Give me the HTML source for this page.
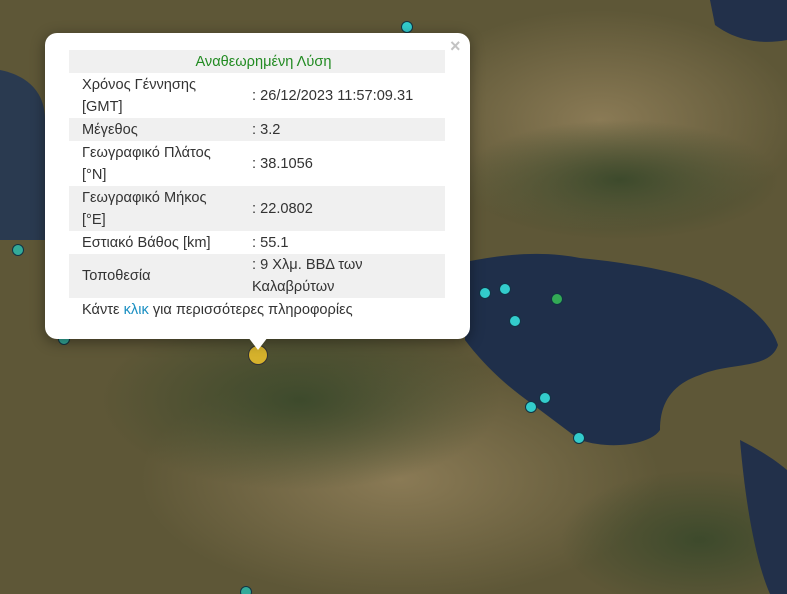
<!DOCTYPE html>
<html><head><meta charset="utf-8"><style>
html,body{margin:0;padding:0;width:787px;height:594px;overflow:hidden}
body{position:relative;font-family:"Liberation Sans",Arial,sans-serif;background:#5b5436}
#map{position:absolute;left:0;top:0;width:787px;height:594px}
.pop{position:absolute;left:45px;top:33px;width:425px;height:306px;background:#fff;border-radius:12px;box-shadow:0 3px 14px rgba(0,0,0,.4)}
.tip{position:absolute;left:248px;top:337px;width:0;height:0;border-left:10px solid transparent;border-right:10px solid transparent;border-top:13px solid #fff}
.x{position:absolute;left:450px;top:36px;color:#c3c3c3;font:bold 18px "Liberation Sans",sans-serif}
table{position:absolute;left:69px;top:50px;width:376px;border-collapse:collapse;font-size:14.6px;color:#333}
td{padding:0 0 0 13px;line-height:22px}
tr.g{background:#f0f0f0}
td.v{width:193px;padding-left:0}
.h{text-align:center;color:#228b22;height:23px;background:#f0f0f0}
.lk{position:absolute;left:82px;top:302px;font-size:14.6px;color:#333}
.lk span{color:#1a8fc2}
.d{position:absolute;width:10px;height:10px;border-radius:50%;border:1px solid #134;}
</style></head><body>
<svg id="map" viewBox="0 0 787 594">
<defs>
<radialGradient id="a" cx=".5" cy=".5" r=".5"><stop offset="0" stop-color="#8a7a55"/><stop offset="1" stop-color="#8a7a55" stop-opacity="0"/></radialGradient>
<radialGradient id="b" cx=".5" cy=".5" r=".5"><stop offset="0" stop-color="#3d4a2c"/><stop offset="1" stop-color="#3d4a2c" stop-opacity="0"/></radialGradient>
</defs>
<rect width="787" height="594" fill="#5e5737"/>
<ellipse cx="600" cy="120" rx="200" ry="110" fill="url(#a)"/>
<ellipse cx="400" cy="480" rx="260" ry="120" fill="url(#a)"/>
<ellipse cx="300" cy="400" rx="200" ry="90" fill="url(#b)"/>
<ellipse cx="700" cy="540" rx="140" ry="70" fill="url(#b)"/>
<ellipse cx="620" cy="180" rx="160" ry="60" fill="url(#b)"/>
<path d="M465 262 C500 255 540 250 580 258 C620 262 660 268 700 280 C740 295 770 320 778 345 C770 370 730 362 700 375 C670 385 660 405 660 430 C650 445 610 450 580 440 C560 425 540 410 520 395 C500 380 480 360 465 340 Z" fill="#1f2f4a"/>
<path d="M710 0 L787 0 L787 40 C760 45 735 40 715 25 Z" fill="#22304a"/>
<path d="M0 70 C25 75 45 90 45 120 L45 240 L0 240 Z" fill="#2a3a50"/>
<path d="M740 440 C760 450 775 460 787 470 L787 594 L770 594 C755 560 745 500 740 440 Z" fill="#22304a"/>
</svg>
<div class="d" style="left:401px;top:21px;background:#3cc"></div>
<div class="d" style="left:12px;top:244px;background:#3a9"></div>
<div class="d" style="left:479px;top:287px;background:#3cc"></div>
<div class="d" style="left:499px;top:283px;background:#3cc"></div>
<div class="d" style="left:551px;top:293px;background:#3a5"></div>
<div class="d" style="left:509px;top:315px;background:#3cc"></div>
<div class="d" style="left:525px;top:401px;background:#3cc"></div>
<div class="d" style="left:539px;top:392px;background:#3cc"></div>
<div class="d" style="left:573px;top:432px;background:#3cc"></div>
<div class="d" style="left:240px;top:586px;background:#3a9"></div>
<div class="d" style="left:58px;top:333px;background:#3a9"></div>
<div class="d" style="left:248px;top:345px;width:18px;height:18px;background:#d6b22c;border-color:#333"></div>
<div class="pop"></div>
<div class="tip"></div>
<div class="x">×</div>
<table>
<tr><td colspan="2" class="h">Αναθεωρημένη Λύση</td></tr>
<tr style="height:45px"><td>Χρόνος Γέννησης<br>[GMT]</td><td class="v">: 26/12/2023 11:57:09.31</td></tr>
<tr class="g" style="height:23px"><td>Μέγεθος</td><td class="v">: 3.2</td></tr>
<tr style="height:45px"><td>Γεωγραφικό Πλάτος<br>[°N]</td><td class="v">: 38.1056</td></tr>
<tr class="g" style="height:45px"><td>Γεωγραφικό Μήκος<br>[°E]</td><td class="v">: 22.0802</td></tr>
<tr style="height:23px"><td>Εστιακό Βάθος [km]</td><td class="v">: 55.1</td></tr>
<tr class="g" style="height:44px"><td>Τοποθεσία</td><td class="v">: 9 Χλμ. ΒΒΔ των<br>Καλαβρύτων</td></tr>
</table>
<div class="lk">Κάντε <span>κλικ</span> για περισσότερες πληροφορίες</div>
</body></html>
